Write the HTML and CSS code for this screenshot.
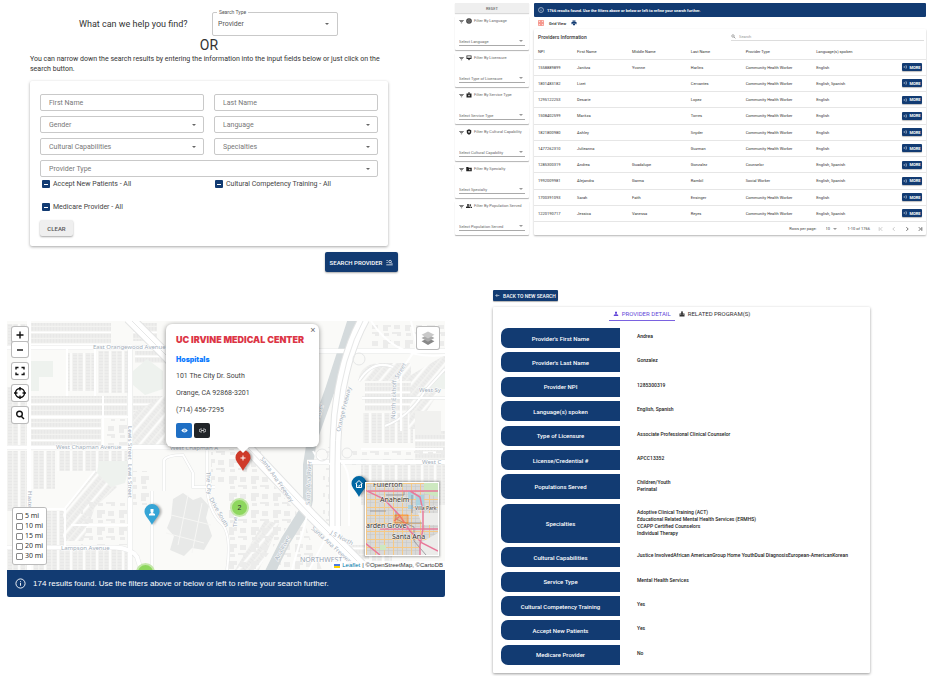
FILE: index.html
```html
<!DOCTYPE html>
<html lang="en">
<head>
<meta charset="utf-8">
<title>Provider Search</title>
<link rel="stylesheet" href="styles.css">
</head>
<body>
<svg class="defs" aria-hidden="true">
  <symbol id="i-info" viewBox="0 0 24 24"><circle cx="12" cy="12" r="10" fill="none" stroke="currentColor" stroke-width="2"/><path d="M11 7h2v2h-2zM11 11h2v6h-2z" fill="currentColor"/></symbol>
  <symbol id="i-filter" viewBox="0 0 24 24"><path d="M1 5h22v3H1zM5 11h14v3H5zM9 17h6v3H9z" fill="currentColor"/></symbol>
  <symbol id="i-globe" viewBox="0 0 24 24"><circle cx="12" cy="12" r="11" fill="currentColor"/><path d="M3 8.500h18M3 15.500h18M12 2c-6 6-6 14 0 20M12 2c6 6 6 14 0 20" fill="none" stroke="#fff" stroke-width="1.200"/></symbol>
  <symbol id="i-license" viewBox="0 0 24 24"><path d="M2 2h20v14h-6l-4 6-4-6H2z" fill="currentColor"/><path d="M5 5h14v6H5z" fill="#fff"/></symbol>
  <symbol id="i-case" viewBox="0 0 24 24"><path d="M8 6V2h8v4h6v16H2V6zM10 6h4V4h-4z" fill="currentColor" fill-rule="evenodd"/><path d="M11 10h2v3h3v2h-3v3h-2v-3H8v-2h3z" fill="#fff"/></symbol>
  <symbol id="i-shield" viewBox="0 0 24 24"><path d="M12 1l9 4v7c0 5-4 9-9 11-5-2-9-6-9-11V5z" fill="currentColor"/><circle cx="12" cy="11" r="3.500" fill="#fff"/></symbol>
  <symbol id="i-folder" viewBox="0 0 24 24"><path d="M1 4h8l2 3h12v14H1z" fill="currentColor"/><path d="M15 10l1.200 3H19l-2.200 2 .8 3-2.600-1.700L12.400 18l.8-3-2.200-2h2.800z" fill="#fff"/></symbol>
  <symbol id="i-people" viewBox="0 0 24 24"><circle cx="8" cy="8" r="4" fill="currentColor"/><circle cx="17" cy="8" r="3.500" fill="currentColor"/><path d="M0 20v-3c0-5 16-5 16 0v3zM18 20v-3c0-1-.5-2-1-3 4 0 7 1 7 3v3z" fill="currentColor"/></symbol>
  <symbol id="i-search" viewBox="0 0 24 24"><circle cx="9.500" cy="9.500" r="6" fill="none" stroke="currentColor" stroke-width="2.500"/><path d="M14 14l7 7" stroke="currentColor" stroke-width="3"/></symbol>
  <symbol id="i-manage" viewBox="0 0 24 24"><path d="M1 4h6v2H1zM1 11h6v2H1zM1 19h22v2H1z" fill="currentColor"/><circle cx="14" cy="9" r="4.500" fill="none" stroke="currentColor" stroke-width="2.500"/><path d="M17 12l5 5" stroke="currentColor" stroke-width="2.500"/></symbol>
  <symbol id="i-grid" viewBox="0 0 24 24"><path d="M2 2h20v20H2zM2 12h20M12 2v20M7 7h10v10H7z" fill="none" stroke="currentColor" stroke-width="2"/></symbol>
  <symbol id="i-print" viewBox="0 0 24 24"><path d="M6 2h12v5H6zM2 8h20v9h-4v-3H6v3H2zM8 15h8v6H8z" fill="currentColor"/></symbol>
  <symbol id="i-more" viewBox="0 0 24 24"><path d="M2 12h10M9 8l4 4-4 4M14 5h7v14h-7" fill="none" stroke="currentColor" stroke-width="2.500"/></symbol>
  <symbol id="i-back" viewBox="0 0 24 24"><path d="M21 12H4M11 5l-7 7 7 7" fill="none" stroke="currentColor" stroke-width="2.600"/></symbol>
  <symbol id="i-person" viewBox="0 0 24 24"><path d="M8 3h8v4a4 5 0 0 1-8 0zM3 20v-3c0-5 18-5 18 0v3z" fill="currentColor"/></symbol>
  <symbol id="i-city" viewBox="0 0 24 24"><path d="M2 10h6V2h8v8h6v12H2z" fill="currentColor"/><path d="M11 5h2v3h-2zM11 11h2v3h-2zM5 13h2v3H5zM17 13h2v3h-2z" fill="#fff"/></symbol>
</svg>

<main class="page">
  <div class="column">
    <section class="finder">
      <div class="ask">
        <label for="search-type">What can we help you find?</label>
        <div class="type-box pick">
          <span class="type-legend">Search Type</span>
          <select id="search-type"><option>Provider</option></select>
        </div>
      </div>
      <h1>OR</h1>
      <p class="hint">You can narrow down the search results by entering the information into the input fields below or just click on the search button.</p>
      <form class="form-card">
        <div class="fields">
          <input class="field" type="text" placeholder="First Name" aria-label="First Name">
          <input class="field" type="text" placeholder="Last Name" aria-label="Last Name">
          <div class="pick"><select class="field" aria-label="Gender"><option>Gender</option></select></div>
          <div class="pick"><select class="field" aria-label="Language"><option>Language</option></select></div>
          <div class="pick"><select class="field" aria-label="Cultural Capabilities"><option>Cultural Capabilities</option></select></div>
          <div class="pick"><select class="field" aria-label="Specialties"><option>Specialties</option></select></div>
          <div class="pick wide"><select class="field" aria-label="Provider Type"><option>Provider Type</option></select></div>
        </div>
        <div class="checks">
          <label><input type="checkbox" class="some">Accept New Patients - All</label>
          <label><input type="checkbox" class="some">Cultural Competency Training - All</label>
          <label><input type="checkbox" class="some">Medicare Provider - All</label>
        </div>
        <button class="clear" type="button">CLEAR</button>
      </form>
      <button class="search-btn" type="button">SEARCH PROVIDER <svg><use href="#i-manage"/></svg></button>
    </section>

    <section class="map-panel">
      <div class="map">
        <svg class="tiles" viewBox="0 0 438 249" preserveAspectRatio="xMidYMid slice" aria-hidden="true">
          <defs>
            <pattern id="lotsV" width="13" height="3" patternUnits="userSpaceOnUse"><rect width="13" height="3" fill="#f3f3f1"/><path d="M1 .4h4v2.200H1zM6.500 .4h4v2.200h-4z" fill="#e8e8e7"/><path d="M12 0v3" stroke="#fff" stroke-width="1.500"/></pattern>
            <pattern id="lotsH" width="3" height="12" patternUnits="userSpaceOnUse"><rect width="3" height="12" fill="#f3f3f1"/><path d="M.4 1h2.200v3.800H.4zM.4 6h2.200v3.800H.4z" fill="#e8e8e7"/><path d="M0 11.300h3" stroke="#fff" stroke-width="1.500"/></pattern>
            <pattern id="lotsD" width="13" height="3" patternUnits="userSpaceOnUse" patternTransform="rotate(40)"><rect width="13" height="3" fill="#f3f3f1"/><path d="M1 .4h4v2.200H1zM6.500 .4h4v2.200h-4z" fill="#e8e8e7"/><path d="M12 0v3" stroke="#fff" stroke-width="1.500"/></pattern>
            <pattern id="big" width="22" height="17" patternUnits="userSpaceOnUse"><path d="M2 2h8v4H7v4H2zM13 3h6v5h-6zM3 12h5v3H3zM11 11h9v4h-4v-2h-5z" fill="#ececeb"/></pattern>
          </defs>
          <rect width="438" height="249" fill="#fafaf8"/>
          <g fill="url(#lotsV)">
            <path d="M0 3h20v21H0zM0 66h22v58H0zM60 32h28v38H60zM90 30h31v42H90zM0 130h20v60H0zM50 130h70v20H50zM24 130h24v38H24zM0 228h120v21H0zM356 92h50v30h-50zM354 144h84v40h-84zM24 190h34v34H24zM365 190h20v59h-20z"/>
          </g>
          <g fill="url(#lotsH)">
            <path d="M24 2h80v22H24zM24 75h96v20H24zM24 98h70v26H24zM126 2h24v18h-24zM126 75h30v20h-30zM358 62h46v28h-46zM408 110h30v30h-30zM128 30h30v12h-30zM340 224h22v25h-22z"/>
          </g>
          <g fill="url(#lotsD)">
            <path d="M56 190l32-40 22 16-22 20-12 34H56zM126 92l32-18v50h-32zM404 54l34-20v28l-30 46h-6zM352 56q4-14 22-14h30v18h-52zM258 199l14 4-20 46h-24z"/>
          </g>
          <g fill="url(#big)">
            <path d="M74 180h46v44H74zM100 98h20v26h-20zM204 128h50v34h-50zM240 132l50 60-40 57h-30V160zM365 4h73v30h-73zM295 196l-30 53h50zM316 126h10v90h-10zM345 128h93v16h-93zM126 150h16v34h-16z"/>
          </g>
          <path d="M22 40h24v16H32v14H22zM126 50l14-12 16 12v18l-18 6-12-10zM92 140h32l-6 22-14 4-14-14zM415 66h8l8-12 7-2v16h-23z" fill="#eef2ee"/>
          <path d="M408 90h26v24h-26z" fill="#f1f1ef"/>
          <g transform="translate(-9 24)">
            <path d="M175 154l10-6 10 7 8-3 8 9-3 12 6 18-8 14-12-2-8 8-14-6 4-14-7-8 4-10z" fill="#e8e9e8"/>
            <path d="M173 170l40 10M168 188l38 10M190 150l-10 50M204 158l-10 50" stroke="#f6f6f4" stroke-width="1"/>
          </g>
          <path d="M346-2L323 69 305 119 301 144 301 179Q300 187 294 195L279 219 263 251" fill="none" stroke="#d4dadc" stroke-width="10"/>
          <g fill="none" stroke="#e6e7e7" stroke-width="5">
            <path d="M0 26.500H160M312 30H438M0 126.500H160M300 141H438M0 226.500H108Q124 227 130 236L134 249M123 24V249M123 126H200"/>
          </g>
          <g fill="none" stroke="#fff" stroke-width="4">
            <path d="M0 26.500H160M312 30H438M0 126.500H160M300 141H438M0 226.500H108Q124 227 130 236L134 249M123 24V249M22 0V249M123 126H200"/>
          </g>
          <g fill="none" stroke="#e4e5e5" stroke-width="3">
            <path d="M157 170V139Q160 134 176 134L186 152V166H208M200 126V170Q203 192 214 202T220 249M355 77H438M378 105Q402 96 418 70L438 48M352 60Q366 38 386 46M145 170V249"/>
          </g>
          <g fill="none" stroke="#fff" stroke-width="2">
            <path d="M157 170V139Q160 134 176 134L186 152V166H208M200 126V170Q203 192 214 202T220 249M404 0L410 26 394 50 394 110M355 77H438M378 105Q402 96 418 70L438 48M352 60Q366 38 386 46M354 128H436M145 170V249M22 96H123M96 75V124M60 28V75M88 28V75M56 190L88 150M64 204H123M22 188H58V226M364 0Q390 40 438 34"/>
          </g>
          <g fill="none" stroke="#e3e4e4" stroke-width="12">
            <path d="M122-3L160 35 241 127 305 195 365 255M357-2Q336 36 330 94 328 120 328 144V205"/>
          </g>
          <g fill="none" stroke="#fff" stroke-width="10">
            <path d="M122-3L160 35 241 127 305 195 365 255M357-2Q336 36 330 94 328 120 328 144V205Q328 230 350 250"/>
            <path d="M330 138Q340 142 342 160V205M326 144Q310 140 306 130M328 200L302 249M300 195L285 249" stroke-width="2"/>
          </g>
          <g fill="none" stroke="#e6e7e7" stroke-width="1"><path d="M122-3L160 35 241 127 305 195 365 255M357-2Q336 36 330 94 328 120 328 144V205"/><circle cx="352" cy="38" r="6"/><circle cx="315" cy="134" r="6"/><circle cx="340" cy="132" r="5"/></g>
          <g class="road-names">
            <text x="86" y="28">East Orangewood Avenue</text>
            <text x="49" y="128">West Chapman Avenue</text>
            <text x="163" y="129">West Chapman A</text>
            <text x="54" y="229">Lampson Avenue</text>
            <text x="412" y="71">West Sy</text>
            <text x="415" y="143">West C</text>
            <text transform="translate(121 105) rotate(90)">Lewis Street</text>
            <text transform="translate(121 143) rotate(90)">Lewis Street</text>
            <text transform="translate(21 170) rotate(90)">Haster</text>
            <text transform="translate(199 151) rotate(86)">The City</text>
            <text transform="translate(202 178) rotate(60)">Drive South</text>
            <text transform="translate(230 206) rotate(-90)">The City</text>
            <text transform="translate(253 138) rotate(55)">Santa Ana Freeway</text>
            <text transform="translate(304 208) rotate(42)">Santa Ana Freeway</text>
            <text transform="translate(323 213) rotate(28)">J S North</text>
            <text transform="translate(333 111) rotate(-76)">Orange Freeway</text>
            <text transform="translate(303 184) rotate(-88)">Santa Ana River</text>
            <text transform="translate(271 240) rotate(-62)">Ana River</text>
            <text transform="translate(309 109) rotate(-73)">Ana River</text>
            <text transform="translate(388 98) rotate(-88)">North Eckhoff</text>
            <text transform="translate(391 58) rotate(-60)">Street</text>
            <text class="district" x="293" y="241">NORTHWEST</text>
          </g>
        </svg>

        <svg class="marker red" viewBox="0 0 16 22"><path d="M8 21C6 16 .5 12 .5 7.500a7.500 7.500 0 0 1 15 0C15.500 12 10 16 8 21z" fill="#cf3a29"/><path d="M8 5.500v5M5.500 8h5" stroke="#fff" stroke-width="1"/></svg>
        <svg class="marker sky" viewBox="0 0 16 22"><path d="M8 21C6 16 .5 12 .5 7.500a7.500 7.500 0 0 1 15 0C15.500 12 10 16 8 21z" fill="#36a5d6"/><path d="M6.500 5h3v2.500a1.500 1.500 0 0 1-3 0zM5 11.500V10q3-2 6 0v1.500z" fill="#fff"/></svg>
        <svg class="marker navy" viewBox="0 0 16 22"><path d="M8 21C6 16 .5 12 .5 7.500a7.500 7.500 0 0 1 15 0C15.500 12 10 16 8 21z" fill="#0067a3"/><path d="M4.500 8L8 4.500l3.500 3.500M5.500 7.500v4h5v-4M7 9.500l1 1 1.500-2" fill="none" stroke="#fff" stroke-width="1"/></svg>
        <span class="cluster c-two">2</span>
        <div class="cluster-edge"><span class="cluster"></span></div>

        <div class="tools">
          <div class="zoom"><button type="button" aria-label="Zoom in"><svg viewBox="0 0 16 16"><path d="M8 4.500v7M4.500 8h7"/></svg></button><button type="button" aria-label="Zoom out"><svg viewBox="0 0 16 16"><path d="M5 8h6"/></svg></button></div>
          <button type="button" aria-label="Full screen"><svg viewBox="0 0 16 16"><path d="M4 6.500V4.500h2.500M9.500 4.500H12v2M12 9.500v2H9.500M6.500 11.500H4v-2"/></svg></button>
          <button type="button" aria-label="Locate"><svg viewBox="0 0 16 16"><circle cx="8" cy="8" r="4.500"/><path d="M8 2v3.500M8 10.500V14M2 8h3.500M10.500 8H14"/></svg></button>
          <button type="button" aria-label="Search"><svg viewBox="0 0 16 16"><circle cx="7.500" cy="7" r="2.800"/><path d="M9.500 9.500l2.500 2.500"/></svg></button>
        </div>
        <button class="layers" type="button" aria-label="Layers"><svg viewBox="0 0 24 24"><path d="M12 12l7 3.500-7 4-7-4z" fill="#888"/><path d="M12 8l7 4-7 4-7-4z" fill="#aaa"/><path d="M12 5l7 3.500-7 4-7-4z" fill="#c9c9c9"/></svg></button>

        <fieldset class="radius">
          <label><input type="checkbox">5 mi</label>
          <label><input type="checkbox">10 mi</label>
          <label><input type="checkbox">15 mi</label>
          <label><input type="checkbox">20 mi</label>
          <label><input type="checkbox">30 mi</label>
        </fieldset>

        <svg class="mini" viewBox="0 0 72 72" role="img" aria-label="Overview map">
          <defs><pattern id="streets" width="9" height="8" patternUnits="userSpaceOnUse"><rect width="9" height="8" fill="#d9d9d8"/><path d="M0 3.500h9M4.500 0v8" stroke="#c8c8c6" stroke-width=".6"/><path d="M.5 0v8M0 .5h9" stroke="#f5c987" stroke-width="1"/></pattern></defs>
          <rect width="72" height="72" fill="url(#streets)"/>
          <path d="M42 8h6v8h-6zM50 12h8v12h-8zM42 22h5v4h-5z" fill="#abd3df"/>
          <path d="M58 0h14v14l-14-4zM14 62h6v5h-6zM66 56h6v10h-6z" fill="#cde8c0"/>
          <path d="M52 30h20v12H56zM54 60l18-10v22H54z" fill="#ececea"/>
          <path d="M20 12H38V8M20 28H4M30 28V36L48 44V58L60 72M28 40H56M46 12V30" fill="none" stroke="#8b8b92" stroke-width=".8"/>
          <g fill="none" stroke="#e8799a" stroke-width="1.500"><path d="M-1 7L18 16 34 33 44 48 56 60 72 68M2 8H72M44 8L54 14 57 28 57 46 54 62V72M14 46H72M-1 60L14 72M34 33L28 38"/></g>
          <rect x="29" y="32" width="13" height="8" fill="#ff780044" stroke="#ff7800" stroke-width=".6"/>
          <g class="mini-names"><text x="7" y="4">Fullerton</text><text x="14" y="19">Anaheim</text><text x="0" y="45">arden Grove</text><text x="26" y="56">Santa Ana</text><text class="tiny" x="49" y="27">Villa Park</text></g>
        </svg>
        <div class="credits"><svg viewBox="0 0 12 8"><path d="M0 0h12v4H0z" fill="#4c7be1"/><path d="M0 4h12v4H0z" fill="#ffd500"/></svg> <a href="#">Leaflet</a> | ©OpenStreetMap, ©CartoDB</div>

        <article class="popup">
          <button class="close" type="button" aria-label="Close">×</button>
          <h2>UC IRVINE MEDICAL CENTER</h2>
          <h3>Hospitals</h3>
          <p>101 The City Dr. South</p>
          <p>Orange, CA 92868-3201</p>
          <p>(714) 456-7295</p>
          <div class="popup-actions">
            <button type="button" class="view" aria-label="View"><svg viewBox="0 0 24 24"><path d="M1 12Q12-2 23 12 12 26 1 12z" fill="#fff"/><circle cx="12" cy="12" r="4.500" fill="#8ab8e6"/></svg></button>
            <button type="button" class="link" aria-label="Link"><svg viewBox="0 0 24 24"><path d="M10 7H6a5 5 0 0 0 0 10h4M14 7h4a5 5 0 0 1 0 10h-4M7 12h10" fill="none" stroke="#fff" stroke-width="2.500"/></svg></button>
          </div>
        </article>
      </div>
      <div class="banner map-banner"><svg><use href="#i-info"/></svg>174 results found. Use the filters above or below or left to refine your search further.</div>
    </section>
  </div>

  <div class="column">
    <section class="results">
      <aside class="filters">
        <button type="button" class="reset">RESET</button>
        <div class="filter"><label for="f1"><svg><use href="#i-filter"/></svg><svg class="kind"><use href="#i-globe"/></svg>Filter By Language</label><div class="pick"><select id="f1"><option>Select Language</option></select></div></div>
        <div class="filter"><label for="f2"><svg><use href="#i-filter"/></svg><svg class="kind"><use href="#i-license"/></svg>Filter By Licensure</label><div class="pick"><select id="f2"><option>Select Type of Licensure</option></select></div></div>
        <div class="filter"><label for="f3"><svg><use href="#i-filter"/></svg><svg class="kind"><use href="#i-case"/></svg>Filter By Service Type</label><div class="pick"><select id="f3"><option>Select Service Type</option></select></div></div>
        <div class="filter"><label for="f4"><svg><use href="#i-filter"/></svg><svg class="kind"><use href="#i-shield"/></svg>Filter By Cultural Capability</label><div class="pick"><select id="f4"><option>Select Cultural Capability</option></select></div></div>
        <div class="filter"><label for="f5"><svg><use href="#i-filter"/></svg><svg class="kind"><use href="#i-folder"/></svg>Filter By Specialty</label><div class="pick"><select id="f5"><option>Select Specialty</option></select></div></div>
        <div class="filter"><label for="f6"><svg><use href="#i-filter"/></svg><svg class="kind"><use href="#i-people"/></svg>Filter By Population Served</label><div class="pick"><select id="f6"><option>Select Population Served</option></select></div></div>
      </aside>
      <div class="listing">
        <div class="banner"><svg><use href="#i-info"/></svg>1766 results found. Use the filters above or below or left to refine your search further.</div>
        <div class="toolbar"><svg class="grid-icon"><use href="#i-grid"/></svg><span>Grid View</span><button type="button" aria-label="Print"><svg><use href="#i-print"/></svg></button></div>
        <div class="table-card">
          <div class="table-head"><h2>Providers Information</h2><label class="find"><svg><use href="#i-search"/></svg><input type="text" placeholder="Search" aria-label="Search providers"></label></div>
          <table>
            <colgroup><col class="c-npi"><col class="c-first"><col class="c-middle"><col class="c-last"><col class="c-type"><col><col class="c-more"></colgroup>
            <thead><tr><th>NPI</th><th>First Name</th><th>Middle Name</th><th>Last Name</th><th>Provider Type</th><th>Language(s) spoken</th><th></th></tr></thead>
            <tbody>
              <tr><td>1558889899</td><td>Janitza</td><td>Yvonne</td><td>Harlins</td><td>Community Health Worker</td><td>English</td><td><button type="button"><svg><use href="#i-more"/></svg>MORE</button></td></tr>
              <tr><td>1801483182</td><td>Lizet</td><td></td><td>Cervantes</td><td>Community Health Worker</td><td>English, Spanish</td><td><button type="button"><svg><use href="#i-more"/></svg>MORE</button></td></tr>
              <tr><td>1295122253</td><td>Desarie</td><td></td><td>Lopez</td><td>Community Health Worker</td><td>English</td><td><button type="button"><svg><use href="#i-more"/></svg>MORE</button></td></tr>
              <tr><td>1508402599</td><td>Maritza</td><td></td><td>Torres</td><td>Community Health Worker</td><td>English</td><td><button type="button"><svg><use href="#i-more"/></svg>MORE</button></td></tr>
              <tr><td>1821800980</td><td>Ashley</td><td></td><td>Snyder</td><td>Community Health Worker</td><td>English</td><td><button type="button"><svg><use href="#i-more"/></svg>MORE</button></td></tr>
              <tr><td>1477262310</td><td>Julieanna</td><td></td><td>Guzman</td><td>Community Health Worker</td><td>English</td><td><button type="button"><svg><use href="#i-more"/></svg>MORE</button></td></tr>
              <tr><td>1285300319</td><td>Andrea</td><td>Guadalupe</td><td>Gonzalez</td><td>Counselor</td><td>English, Spanish</td><td><button type="button"><svg><use href="#i-more"/></svg>MORE</button></td></tr>
              <tr><td>1992009981</td><td>Alejandra</td><td>Garma</td><td>Rambil</td><td>Social Worker</td><td>English, Spanish</td><td><button type="button"><svg><use href="#i-more"/></svg>MORE</button></td></tr>
              <tr><td>1700391093</td><td>Sarah</td><td>Faith</td><td>Ensinger</td><td>Community Health Worker</td><td>English</td><td><button type="button"><svg><use href="#i-more"/></svg>MORE</button></td></tr>
              <tr><td>1220190717</td><td>Jessica</td><td>Vanessa</td><td>Reyes</td><td>Community Health Worker</td><td>English, Spanish</td><td><button type="button"><svg><use href="#i-more"/></svg>MORE</button></td></tr>
            </tbody>
          </table>
          <div class="pager">
            <label for="rows">Rows per page:</label>
            <div class="pick"><select id="rows"><option>10</option></select></div>
            <span>1-10 of 1766</span>
            <button type="button" class="off" aria-label="First page"><svg viewBox="0 0 10 10"><path d="M2 2v6M7 2L4 5l3 3"/></svg></button>
            <button type="button" class="off" aria-label="Previous page"><svg viewBox="0 0 10 10"><path d="M6 2L3 5l3 3"/></svg></button>
            <button type="button" aria-label="Next page"><svg viewBox="0 0 10 10"><path d="M4 2l3 3-3 3"/></svg></button>
            <button type="button" aria-label="Last page"><svg viewBox="0 0 10 10"><path d="M3 2l3 3-3 3M8 2v6"/></svg></button>
          </div>
        </div>
      </div>
    </section>

    <section class="detail">
      <button type="button" class="back"><svg><use href="#i-back"/></svg>BACK TO NEW SEARCH</button>
      <div class="detail-card">
        <nav class="tabs"><a href="#" class="active"><svg><use href="#i-person"/></svg>PROVIDER DETAIL</a><a href="#"><svg><use href="#i-city"/></svg>RELATED PROGRAM(S)</a></nav>
        <dl>
          <div><dt>Provider's First Name</dt><dd>Andrea</dd></div>
          <div><dt>Provider's Last Name</dt><dd>Gonzalez</dd></div>
          <div><dt>Provider NPI</dt><dd>1285300319</dd></div>
          <div><dt>Language(s) spoken</dt><dd>English, Spanish</dd></div>
          <div><dt>Type of Licensure</dt><dd>Associate Professional Clinical Counselor</dd></div>
          <div><dt>License/Credential #</dt><dd>APCC13352</dd></div>
          <div><dt>Populations Served</dt><dd>Children/Youth<br>Perinatal</dd></div>
          <div><dt>Specialties</dt><dd>Adoptive Clinical Training (ACT)<br>Educational Related Mental Health Services (ERMHS)<br>CCAPP Certified Counselors<br>Individual Therapy</dd></div>
          <div><dt>Cultural Capabilities</dt><dd>Justice InvolvedAfrican AmericanGroup Home YouthDual DiagnosisEuropean-AmericanKorean</dd></div>
          <div><dt>Service Type</dt><dd>Mental Health Services</dd></div>
          <div><dt>Cultural Competency Training</dt><dd>Yes</dd></div>
          <div><dt>Accept New Patients</dt><dd>Yes</dd></div>
          <div><dt>Medicare Provider</dt><dd>No</dd></div>
        </dl>
      </div>
    </section>
  </div>
</main>
</body>
</html>
```
FILE: styles.css
```css
:root {
  --navy: #123b72;
  --line: #c9c9c9;
  --ink: #333;
  --shadow: 0 1px 3px rgba(0, 0, 0, .35);
}
* { box-sizing: border-box; margin: 0; padding: 0; }
body { background: #fff; color: var(--ink); font-family: Roboto, "Liberation Sans", sans-serif; }
button, input, select { font: inherit; color: inherit; border: 0; background: none; border-radius: 0; outline: 0; }
button { display: flex; align-items: center; justify-content: center; cursor: pointer; }
select { appearance: none; width: 100%; }
svg { display: block; flex: none; }
.defs { position: absolute; width: 0; height: 0; }

.page { display: grid; grid-template-columns: 438fr 472fr; gap: 10px; padding-left: 7px; }
.column { display: flex; flex-direction: column; min-width: 0; }

.pick { position: relative; }
.pick::after {
  content: ""; position: absolute; right: 8px; top: 50%; margin-top: -1px;
  border: 2px solid transparent; border-top-color: #666; border-bottom: 0; pointer-events: none;
}

/* search form */
.finder { padding: 12px 57px 0 23px; min-height: 321px; display: flex; flex-direction: column; font-size: 7px; }
.ask { display: flex; align-items: center; justify-content: space-between; padding: 0 50px 0 49px; font-size: 9px; }
.type-box { width: 126px; height: 24px; border: 1px solid var(--line); border-radius: 2px; font-size: 7px; }
.type-box select { height: 22px; padding-left: 5px; color: #555; }
.type-legend { position: absolute; left: 4px; top: -5px; padding: 0 2px; background: #fff; font-size: 5px; line-height: 8px; color: #555; }
h1 { font-size: 14px; line-height: 18px; font-weight: 400; text-align: center; }
.hint { line-height: 10px; }
.form-card { margin-top: 7px; padding: 13px 10px 10px; box-shadow: var(--shadow); border-radius: 2px; }
.fields { display: grid; grid-template-columns: 1fr 1fr; gap: 5px 10px; color: #777; }
.field { display: block; width: 100%; height: 17px; padding: 0 8px; border: 1px solid var(--line); border-radius: 2px; }
.field::placeholder { color: #777; }
.wide { grid-column: 1 / -1; }
.checks { display: grid; grid-template-columns: 1fr 1fr; gap: 13px 10px; margin-top: 2px; padding-left: 2px; line-height: 10px; color: #444; }
.checks label { display: flex; align-items: center; gap: 3px; white-space: nowrap; }
.some { appearance: none; width: 8px; height: 8px; border-radius: 1px; background: linear-gradient(#fff, #fff) center / 4px 1px no-repeat var(--navy); }
.clear { margin-top: 8px; width: 33px; height: 16px; background: #efefef; border-radius: 2px; font-size: 6px; font-weight: 500; color: #555; box-shadow: 0 1px 2px rgba(0, 0, 0, .35); }
.search-btn { align-self: flex-end; margin: 6px -10px 0 0; width: 73px; height: 20px; gap: 4px; background: var(--navy); color: #fff; border-radius: 2px; font-size: 6px; font-weight: 500; white-space: nowrap; box-shadow: 0 1px 2px rgba(0, 0, 0, .35); }
.search-btn svg { width: 7px; height: 7px; }

/* map */
.map { position: relative; height: 249px; overflow: hidden; background: #fafaf8; }
.tiles { width: 100%; height: 100%; }
.road-names { font-family: "Noto Sans", sans-serif; font-size: 6px; fill: #a2adb9; stroke: #fff; stroke-width: 1px; paint-order: stroke; }
.district { font-size: 7px; fill: #98a3b0; }
.marker { position: absolute; width: 16px; height: 22px; filter: drop-shadow(2px 0 1px rgba(0, 0, 0, .3)); }
.red { left: 228px; top: 129px; }
.sky { left: 137px; top: 183px; }
.navy { left: 344px; top: 155px; }
.cluster { display: flex; align-items: center; justify-content: center; width: 19px; height: 19px; border-radius: 50%; border: 2px solid #c5e7ab; background: #8ed75e; color: #333; font: 7px "Liberation Sans", sans-serif; }
.c-two { position: absolute; left: 223px; top: 177px; }
.cluster-edge { position: absolute; left: 129px; bottom: 0; height: 7px; overflow: hidden; }
.tools { position: absolute; left: 5px; top: 6px; display: grid; gap: 6px; }
.tools button { width: 16px; height: 16px; background: #fff; border-radius: 2px; box-shadow: 0 0 0 1px #bbb; }
.tools svg { width: 16px; height: 16px; fill: none; stroke: #111; stroke-width: 1.4px; }
.tools .zoom button { height: 15px; }
.layers { position: absolute; right: 6px; top: 6px; width: 22px; height: 22px; background: #fff; border-radius: 2px; box-shadow: 0 0 0 1px #bbb; }
.layers svg { width: 22px; height: 22px; }
.radius { position: absolute; left: 6px; bottom: 6px; width: 33px; padding: 3px; border: 0; border-radius: 2px; background: #fff; box-shadow: 0 0 0 1px #bbb; font: 7px/10px "Noto Sans", sans-serif; }
.radius label { display: flex; align-items: center; gap: 2px; white-space: nowrap; }
.radius input { appearance: none; width: 7px; height: 7px; border: 1px solid #888; border-radius: 1px; background: #fff; }
.mini { position: absolute; right: 6px; bottom: 14px; width: 74px; height: 74px; border: 1px solid #fff; box-shadow: 0 0 2px 1px rgba(0, 0, 0, .3); }
.mini-names { font: 7px "Noto Sans", sans-serif; fill: #333; stroke: rgba(255, 255, 255, .7); stroke-width: 1px; paint-order: stroke; }
.mini-names .tiny { font-size: 5px; }
.credits { position: absolute; right: 0; bottom: 0; display: flex; align-items: center; gap: 2px; padding: 0 2px; background: rgba(255, 255, 255, .8); font: 6px/9px "Liberation Sans", sans-serif; white-space: nowrap; }
.credits svg { width: 6px; height: 4px; }
.credits a { color: #0078a8; text-decoration: none; }
.popup { position: absolute; left: 159px; top: 3px; width: 153px; height: 123px; padding: 11px 10px; background: #fff; border-radius: 6px; box-shadow: 0 1px 5px rgba(0, 0, 0, .45); font-size: 7px; line-height: 9px; }
.popup::after { content: ""; position: absolute; left: 70px; bottom: -6px; border: 7px solid transparent; border-top-color: #fff; border-bottom: 0; }
.popup h2 { font: 900 9px/9px Inter, sans-serif; color: #dc3545; white-space: nowrap; }
.popup h3 { margin: 11px 0 8px; font: 900 7px/9px Inter, sans-serif; color: #0d7bff; }
.popup p { margin-bottom: 8px; color: #444; }
.close { position: absolute; right: 2px; top: 2px; width: 8px; height: 8px; font: 9px/8px "Liberation Sans", sans-serif; color: #666; }
.popup-actions { display: flex; gap: 2px; }
.popup-actions button { width: 16px; height: 15px; border-radius: 2px; background: #1f6fc4; }
.popup-actions .link { background: #212529; }
.popup-actions svg { width: 7px; height: 7px; }

.banner { display: flex; align-items: center; gap: 3px; height: 14px; padding-left: 4px; border-radius: 1px; background: var(--navy); color: #fff; font-size: 4px; font-weight: 700; white-space: nowrap; }
.banner svg { width: 6px; height: 6px; }
.map-banner { height: 27px; gap: 7px; padding-left: 8px; border-radius: 0 0 2px 2px; font: 8px "Liberation Sans", sans-serif; }
.map-banner svg { width: 11px; height: 11px; }

/* result listing */
.results { display: grid; grid-template-columns: 74px minmax(0, 1fr); gap: 5px; padding: 3px 1px 0 0; min-height: 290px; align-content: start; font-size: 4px; }
.filters { display: flex; flex-direction: column; gap: 3px; }
.reset { height: 10px; background: #efefef; box-shadow: 0 1px 1px rgba(0, 0, 0, .15); font-weight: 500; color: #666; }
.filter { flex: 1; padding: 2px 4px 4px; display: flex; flex-direction: column; justify-content: space-between; box-shadow: 0 1px 1px rgba(0, 0, 0, .3); border-radius: 1px; color: #666; }
.filter label { display: flex; align-items: center; gap: 2px; line-height: 6px; white-space: nowrap; }
.filter svg { width: 5px; height: 5px; color: #555; }
.filter .kind { width: 6px; height: 6px; color: #222; }
.filter .pick { border-bottom: 1px solid #aaa; }
.filter select { display: block; height: 8px; }
.filter .pick::after, .pager .pick::after { right: 2px; border-top-color: #999; }
.listing { display: flex; flex-direction: column; min-width: 0; }
.toolbar { display: flex; align-items: center; gap: 5px; height: 12px; padding-left: 4px; font-weight: 500; color: #222; }
.toolbar svg { width: 6px; height: 6px; }
.toolbar .grid-icon { color: #ee4b3b; }
.toolbar button { color: var(--navy); }
.table-card { box-shadow: 0 1px 2px rgba(0, 0, 0, .3); border-radius: 1px; }
.table-head { display: flex; align-items: center; justify-content: space-between; height: 16px; padding: 0 2px 0 4px; }
.table-head h2 { font-size: 5px; font-weight: 500; }
.find { display: flex; align-items: center; gap: 3px; width: 50%; height: 8px; border-bottom: 1px solid #ddd; color: #666; }
.find svg { width: 5px; height: 5px; }
.find input { flex: 1; min-width: 0; }
.find input::placeholder { color: #999; }
table { width: 100%; height: 177px; table-layout: fixed; border-collapse: collapse; color: #333; }
th { font-weight: 400; text-align: left; height: 14px; }
th, td { border-bottom: 1px solid #e6e6e6; line-height: 5px; white-space: nowrap; }
th:first-child, td:first-child { padding-left: 4px; }
.c-npi { width: 11%; }
.c-first { width: 14%; }
.c-middle { width: 15%; }
.c-last { width: 14%; }
.c-type { width: 18%; }
.c-more { width: 24px; }
td button { width: 20px; height: 8px; gap: 2px; border-radius: 1px; background: var(--navy); color: #fff; font-weight: 700; box-shadow: 0 1px 1px rgba(0, 0, 0, .25); }
td svg { width: 4px; height: 4px; }
.pager { display: flex; align-items: center; justify-content: flex-end; gap: 9px; height: 13px; padding-right: 4px; color: #444; }
.pager .pick { width: 13px; }
.pager button { width: 4px; }
.pager svg { width: 6px; height: 6px; fill: none; stroke: #444; stroke-width: 1.3px; }
.pager .off svg { stroke: #bbb; }

/* provider detail */
.detail { padding: 0 57px 3px 38px; }
.back { width: 65px; height: 11px; gap: 3px; border-radius: 1px; background: var(--navy); color: #fff; font-size: 5px; font-weight: 500; white-space: nowrap; box-shadow: 0 1px 1px rgba(0, 0, 0, .3); }
.back svg { width: 5px; height: 5px; }
.detail-card { margin-top: 6px; padding: 0 8px 8px; border-radius: 1px; box-shadow: 0 1px 3px rgba(0, 0, 0, .4); }
.tabs { display: flex; justify-content: center; margin: 0 0 7px; font-size: 6px; }
.tabs a { display: flex; align-items: center; gap: 3px; height: 14px; padding: 0 4px; border-bottom: 1px solid transparent; color: #333; text-decoration: none; white-space: nowrap; }
.tabs svg { width: 6px; height: 6px; }
.tabs .active { color: #6246d8; border-color: #7a62e0; }
dl { display: flex; flex-direction: column; justify-content: space-between; min-height: 337px; }
dl div { display: grid; grid-template-columns: 119px minmax(0, 1fr); gap: 17px; min-height: 20px; }
dt { display: flex; align-items: center; justify-content: center; border-radius: 7px 0 0 7px; background: var(--navy); color: #fff; font-size: 6px; font-weight: 500; }
dd { padding: 5px 0 6px; font-size: 5px; line-height: 7px; font-weight: 500; color: #222; white-space: nowrap; }
```
